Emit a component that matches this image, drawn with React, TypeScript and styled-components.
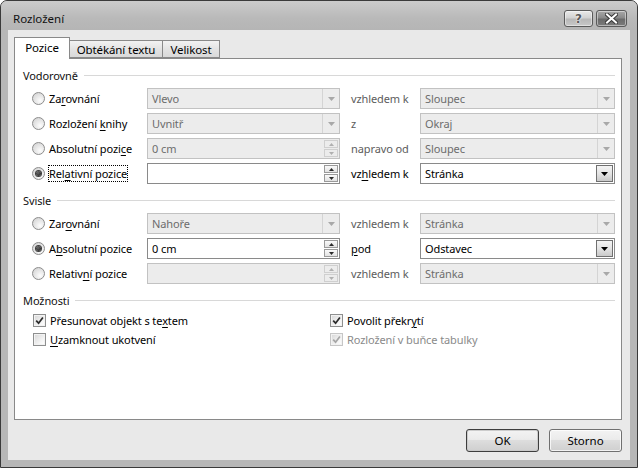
import React from 'react';
import styled, { createGlobalStyle } from 'styled-components';

const GlobalStyle = createGlobalStyle`
  html, body { margin: 0; padding: 0; background: #fff; }
  body {
    font-family: "Noto Sans", "Open Sans", sans-serif;
    font-size: 11px;
    letter-spacing: -0.1px;
    color: #000;
  }
  * { box-sizing: border-box; }
`;

const Window = styled.div`
  width: 638px;
  height: 468px;
  border: 1px solid #3a3a3a;
  border-radius: 7px 7px 0 0;
  background: #b7b7b7;
  display: flex;
  flex-direction: column;
  overflow: hidden;
`;

const TitleBar = styled.div`
  height: 29px;
  flex: none;
  display: flex;
  align-items: flex-start;
  padding: 0 10px 0 12px;
  background: linear-gradient(#cbcbcb, #b9b9b9 60%, #b5b5b5);
`;

const Title = styled.div`
  flex: 1;
  margin-top: 10px;
  line-height: 16px;
  font-size: 11.5px;
  letter-spacing: 0;
  color: #111;
`;

const CaptionButtons = styled.div`
  display: flex;
  gap: 3px;
  margin-top: 9px;
`;

const CaptionButton = styled.div<{ $close?: boolean }>`
  width: ${(p) => (p.$close ? 31 : 29)}px;
  height: 17px;
  border: 1px solid #5a5a5a;
  border-radius: 3px;
  display: flex;
  align-items: center;
  justify-content: center;
  background: ${(p) =>
    p.$close
      ? 'linear-gradient(#a8a8a8, #8a8a8a 45%, #6a6a6a 55%, #7c7c7c)'
      : 'linear-gradient(#eaeaea, #d2d2d2 45%, #b8b8b8 55%, #c8c8c8)'};
  box-shadow: inset 0 0 0 1px rgba(255, 255, 255, 0.45);
`;

const HelpGlyph = styled.span`
  font-family: "DejaVu Sans", sans-serif;
  font-weight: bold;
  font-size: 12px;
  line-height: 12px;
  color: #5a5a5a;
  text-shadow: 0 0 2px #fff, 0 0 1px #fff;
`;

const Client = styled.div`
  flex: 1;
  margin: 0 7px 7px;
  background: #e9e9e9;
  display: flex;
  flex-direction: column;
  padding: 7px 8px 8px 6px;
`;

const TabStrip = styled.div`
  display: flex;
  align-items: flex-end;
  height: 22px;
  margin-bottom: -1px;
  position: relative;
  z-index: 1;
`;

const Tab = styled.div<{ $active?: boolean; $w: number }>`
  width: ${(p) => p.$w}px;
  height: ${(p) => (p.$active ? 22 : 18)}px;
  margin-bottom: ${(p) => (p.$active ? 0 : 1)}px;
  margin-left: ${(p) => (p.$active ? 0 : -1)}px;
  border: 1px solid #898989;
  border-bottom: ${(p) => (p.$active ? 'none' : '1px solid #898989')};
  background: ${(p) => (p.$active ? '#fff' : 'linear-gradient(#f2f2f2, #e3e3e3 50%, #d9d9d9)')};
  display: flex;
  align-items: center;
  justify-content: center;
  padding-bottom: ${(p) => (p.$active ? 2 : 0)}px;
  font-size: 11.5px;
  color: #000;
  &:first-child { margin-left: 0; }
`;

const Panel = styled.div`
  flex: 1;
  background: #fff;
  border: 1px solid #898989;
  display: flex;
  flex-direction: column;
  padding-top: 9px;
`;

const SectionHeader = styled.div<{ $first?: boolean }>`
  display: flex;
  align-items: center;
  height: 15px;
  line-height: 15px;
  padding: 0 6px 0 8px;
  margin-top: ${(p) => (p.$first ? 0 : 7)}px;
  margin-bottom: 3px;
  color: #111;
  &::after {
    content: '';
    flex: 1;
    margin-left: 6px;
    border-top: 1px solid #d8d8d8;
  }
`;

const Row = styled.div`
  display: grid;
  grid-template-columns: 115px 193px 80px 195px;
  align-items: center;
  height: 25px;
  padding-left: 17px;
`;

const Option = styled.label`
  display: flex;
  align-items: center;
  gap: 4px;
  white-space: nowrap;
`;

const Radio = styled.span<{ $checked?: boolean }>`
  width: 13px;
  height: 13px;
  flex: none;
  border-radius: 50%;
  border: 1px solid #8c8c8c;
  background: radial-gradient(circle at 65% 70%, #fdfdfd, #dcdcdc 70%, #cfcfcf);
  display: flex;
  align-items: center;
  justify-content: center;
  &::after {
    content: '';
    display: ${(p) => (p.$checked ? 'block' : 'none')};
    width: 5px;
    height: 5px;
    border-radius: 50%;
    background: radial-gradient(circle at 40% 35%, #6a6a6a, #141414);
    box-shadow: 0 0 0 1px #3c3c3c;
  }
`;

const OptionText = styled.span<{ $focus?: boolean; $disabled?: boolean }>`
  color: ${(p) => (p.$disabled ? '#8a8a8a' : '#000')};
  line-height: 15px;
  border: 1px dotted ${(p) => (p.$focus ? '#000' : 'transparent')};
  margin-left: -1px;
  padding: 0;
`;

const Key = styled.span`
  text-decoration: underline;
  text-underline-offset: 2px;
`;

const Field = styled.div<{ $disabled?: boolean }>`
  height: 21px;
  border: 1px solid ${(p) => (p.$disabled ? '#c2c2c2' : '#8a8a8a')};
  background: ${(p) => (p.$disabled ? '#ececec' : '#fff')};
  color: ${(p) => (p.$disabled ? '#6d6d6d' : '#000')};
  display: flex;
  align-items: stretch;
`;

const FieldText = styled.div`
  flex: 1;
  padding-left: 4px;
  display: flex;
  align-items: center;
  white-space: nowrap;
  overflow: hidden;
`;

const DropButton = styled.div<{ $disabled?: boolean }>`
  width: 17px;
  flex: none;
  display: flex;
  align-items: center;
  justify-content: center;
  background: ${(p) => (p.$disabled ? '#ececec' : 'linear-gradient(#f4f4f4, #e4e4e4 50%, #c9c9c9)')};
  margin: ${(p) => (p.$disabled ? 0 : '1px 1px 1px 0')};
  border: ${(p) => (p.$disabled ? 'none' : '1px solid #707070')};
  border-left: 1px solid ${(p) => (p.$disabled ? '#d4d4d4' : '#707070')};
  color: ${(p) => (p.$disabled ? '#a8a8a8' : '#000')};
`;

const SpinBox = styled.div`
  width: 15px;
  flex: none;
  display: flex;
  flex-direction: column;
  gap: 1px;
  padding: 1px 1px 1px 0;
`;

const SpinHalf = styled.div<{ $disabled?: boolean }>`
  flex: 1;
  display: flex;
  align-items: center;
  justify-content: center;
  border: 1px solid ${(p) => (p.$disabled ? '#cfcfcf' : '#9a9a9a')};
  background: ${(p) => (p.$disabled ? '#ececec' : 'linear-gradient(#fafafa, #e2e2e2)')};
  color: ${(p) => (p.$disabled ? '#b0b0b0' : '#2a2a2a')};
`;

const SideLabel = styled.div<{ $disabled?: boolean }>`
  padding-left: 11px;
  color: ${(p) => (p.$disabled ? '#5c5c5c' : '#000')};
  white-space: nowrap;
`;

const CheckRow = styled.div`
  display: grid;
  grid-template-columns: 297px 1fr;
  align-items: center;
  height: 19px;
  padding-left: 18px;
`;

const CheckBox = styled.span<{ $disabled?: boolean }>`
  width: 13px;
  height: 13px;
  flex: none;
  border: 1px solid ${(p) => (p.$disabled ? '#c6c6c6' : '#8e8f8f')};
  background: linear-gradient(135deg, #d6d6d6, #f6f6f6 70%, #fff);
  box-shadow: inset 0 0 0 1px #f2f2f2;
  display: flex;
  align-items: center;
  justify-content: center;
  color: ${(p) => (p.$disabled ? '#a6a6a6' : '#2b2b2b')};
`;

const Footer = styled.div`
  display: flex;
  justify-content: flex-end;
  gap: 10px;
  margin-top: 9px;
`;

const Button = styled.button<{ $default?: boolean }>`
  width: 73px;
  height: 23px;
  border-radius: 3px;
  border: 1px solid ${(p) => (p.$default ? '#3d3d3d' : '#707070')};
  background: linear-gradient(#f3f3f3, #ebebeb 45%, #dddddd 50%, #cfcfcf);
  box-shadow: inset 0 0 0 1px ${(p) => (p.$default ? 'rgba(200,200,200,.9)' : 'rgba(255,255,255,.75)')};
  font-family: inherit;
  font-size: 11.5px;
  color: #000;
  padding: 0;
`;

function mnemonic(text: string) {
  const i = text.indexOf('&');
  if (i < 0) return text;
  return (
    <>
      {text.slice(0, i)}
      <Key>{text[i + 1]}</Key>
      {text.slice(i + 2)}
    </>
  );
}

const DownArrow = () => (
  <svg width="7" height="4" viewBox="0 0 7 4">
    <path d="M0 0h7L3.5 4z" fill="currentColor" />
  </svg>
);

const SmallArrow = ({ up }: { up?: boolean }) => (
  <svg width="5" height="3" viewBox="0 0 5 3">
    <path d={up ? 'M0 3h5L2.5 0z' : 'M0 0h5L2.5 3z'} fill="currentColor" />
  </svg>
);

const CheckMark = () => (
  <svg width="9" height="9" viewBox="0 0 9 9">
    <path d="M1.2 4.6 3.6 7.2 7.9 1.4" fill="none" stroke="currentColor" strokeWidth="1.7" />
  </svg>
);

const CloseIcon = () => (
  <svg width="13" height="11" viewBox="0 0 13 11">
    <path d="M2 1.5 11 9.5M11 1.5 2 9.5" stroke="#3a3a3a" strokeWidth="4" strokeLinecap="square" />
    <path d="M2 1.5 11 9.5M11 1.5 2 9.5" stroke="#fff" strokeWidth="2" strokeLinecap="square" />
  </svg>
);

function Combo({ value, disabled }: { value: string; disabled?: boolean }) {
  return (
    <Field $disabled={disabled}>
      <FieldText>{value}</FieldText>
      <DropButton $disabled={disabled}>
        <DownArrow />
      </DropButton>
    </Field>
  );
}

function Spin({ value, disabled }: { value: string; disabled?: boolean }) {
  return (
    <Field $disabled={disabled}>
      <FieldText>{value}</FieldText>
      <SpinBox>
        <SpinHalf $disabled={disabled}>
          <SmallArrow up />
        </SpinHalf>
        <SpinHalf $disabled={disabled}>
          <SmallArrow />
        </SpinHalf>
      </SpinBox>
    </Field>
  );
}

type PosRow = {
  label: string;
  checked?: boolean;
  focus?: boolean;
  kind: 'combo' | 'spin';
  value: string;
  enabled?: boolean;
  side: string;
  target: string;
};

const horizontal: PosRow[] = [
  { label: 'Za&rovnání', kind: 'combo', value: 'Vlevo', side: 'vzhledem k', target: 'Sloupec' },
  { label: 'Rozložení &knihy', kind: 'combo', value: 'Uvnitř', side: 'z', target: 'Okraj' },
  { label: 'Absolutní pozi&ce', kind: 'spin', value: '0 cm', side: 'napravo od', target: 'Sloupec' },
  { label: 'Rel&ativní pozice', checked: true, focus: true, kind: 'spin', value: '', enabled: true, side: 'vz&hledem k', target: 'Stránka' },
];

const vertical: PosRow[] = [
  { label: 'Zar&ovnání', kind: 'combo', value: 'Nahoře', side: 'vzhledem k', target: 'Stránka' },
  { label: 'A&bsolutní pozice', checked: true, kind: 'spin', value: '0 cm', enabled: true, side: '&pod', target: 'Odstavec' },
  { label: 'Relativ&ní pozice', kind: 'spin', value: '', side: 'vzhledem k', target: 'Stránka' },
];

function PositionRow({ row }: { row: PosRow }) {
  const off = !row.enabled;
  return (
    <Row>
      <Option>
        <Radio $checked={row.checked} />
        <OptionText $focus={row.focus}>{mnemonic(row.label)}</OptionText>
      </Option>
      {row.kind === 'combo' ? <Combo value={row.value} disabled={off} /> : <Spin value={row.value} disabled={off} />}
      <SideLabel $disabled={off}>{mnemonic(row.side)}</SideLabel>
      <Combo value={row.target} disabled={off} />
    </Row>
  );
}

function Check({ label, checked, disabled }: { label: string; checked?: boolean; disabled?: boolean }) {
  return (
    <Option>
      <CheckBox $disabled={disabled}>{checked && <CheckMark />}</CheckBox>
      <OptionText $disabled={disabled}>{mnemonic(label)}</OptionText>
    </Option>
  );
}

export default function App() {
  return (
    <>
      <GlobalStyle />
      <Window>
        <TitleBar>
          <Title>Rozložení</Title>
          <CaptionButtons>
            <CaptionButton>
              <HelpGlyph>?</HelpGlyph>
            </CaptionButton>
            <CaptionButton $close>
              <CloseIcon />
            </CaptionButton>
          </CaptionButtons>
        </TitleBar>
        <Client>
          <TabStrip>
            <Tab $active $w={56}>Pozice</Tab>
            <Tab $w={94}>Obtékání textu</Tab>
            <Tab $w={58}>Velikost</Tab>
          </TabStrip>
          <Panel>
            <SectionHeader $first>Vodorovně</SectionHeader>
            {horizontal.map((r) => (
              <PositionRow key={r.label} row={r} />
            ))}
            <SectionHeader>Svisle</SectionHeader>
            {vertical.map((r) => (
              <PositionRow key={r.label} row={r} />
            ))}
            <SectionHeader>Možnosti</SectionHeader>
            <CheckRow>
              <Check label="Přesunovat objekt s te&xtem" checked />
              <Check label="Povolit překr&ytí" checked />
            </CheckRow>
            <CheckRow>
              <Check label="&Uzamknout ukotvení" />
              <Check label="Rozložení v buňce tabulky" checked disabled />
            </CheckRow>
          </Panel>
          <Footer>
            <Button $default>OK</Button>
            <Button>Storno</Button>
          </Footer>
        </Client>
      </Window>
    </>
  );
}
